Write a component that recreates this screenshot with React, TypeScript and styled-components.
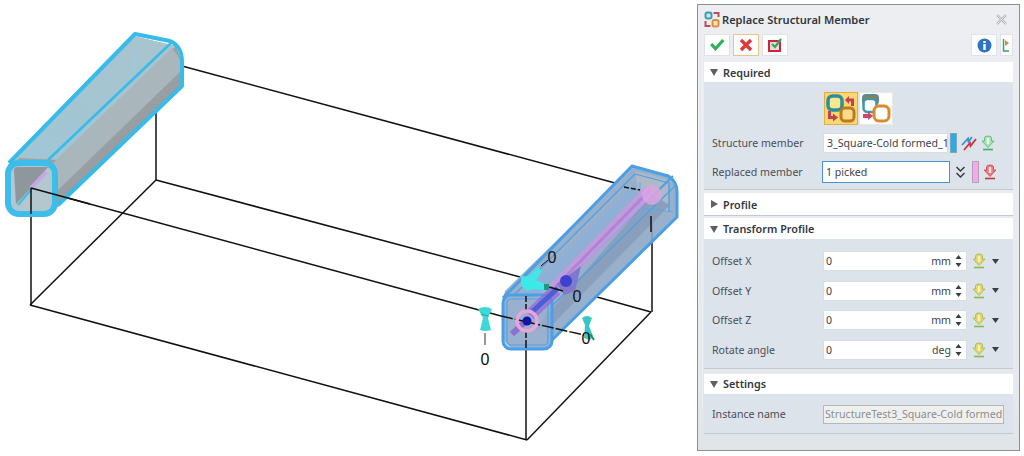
import React from "react";
import styled, { createGlobalStyle } from "styled-components";

const GlobalStyle = createGlobalStyle`
  html, body {
    margin: 0;
    padding: 0;
    background: #fff;
    overflow: hidden;
  }
  body {
    font-family: "Noto Sans", "Liberation Sans", sans-serif;
  }
`;

const Page = styled.div`
  display: flex;
  width: 1024px;
  height: 456px;
  background: #fff;
`;

const Viewport = styled.svg`
  display: block;
  flex: none;
  width: 697px;
  height: 456px;
`;

const Panel = styled.div`
  flex: none;
  display: flex;
  flex-direction: column;
  box-sizing: border-box;
  width: 323px;
  height: 447px;
  margin-top: 4px;
  padding: 0 6px;
  background: linear-gradient(#eceef1, #e6e9ee 85%, #e0e3e8);
  border: 1px solid #8c8e90;
`;

const TitleBar = styled.div`
  display: flex;
  align-items: center;
  height: 29px;
  gap: 2px;
  padding-right: 5px;
`;

const Title = styled.div`
  flex: 1;
  font-size: 11.1px;
  font-weight: 600;
  color: #33373d;
`;

const Toolbar = styled.div`
  display: flex;
  height: 22px;
  gap: 3px;
  margin-bottom: 6px;
`;

const ToolButton = styled.div<{ $active?: boolean; $narrow?: boolean }>`
  box-sizing: border-box;
  display: flex;
  align-items: center;
  justify-content: center;
  width: ${(p) => (p.$narrow ? "13px" : "26px")};
  background: #fdfdfd;
  border: 1px solid ${(p) => (p.$active ? "#eac48a" : "#dfe2e6")};
`;

const Spacer = styled.div`
  flex: 1;
`;

const Section = styled.div<{ $gap?: number }>`
  margin-bottom: ${(p) => p.$gap ?? 0}px;
  background: #dde3eb;
  box-shadow: 0 1px 0 #c3c9d1;
`;

const SectionHeader = styled.div<{ $h?: number }>`
  display: flex;
  align-items: center;
  gap: 5px;
  height: ${(p) => p.$h ?? 20}px;
  padding-left: 6px;
  background: #fff;
  font-size: 10.8px;
  font-weight: 600;
  color: #34383e;
`;

const SectionBody = styled.div<{ $top: number; $bottom: number; $gap: number }>`
  display: flex;
  flex-direction: column;
  gap: ${(p) => p.$gap}px;
  padding: ${(p) => p.$top}px 0 ${(p) => p.$bottom}px 8px;
`;

const PickRow = styled.div`
  display: flex;
  gap: 1px;
  height: 33px;
  padding-left: 112px;
`;

const PickButton = styled.div<{ $active?: boolean }>`
  box-sizing: border-box;
  width: 34px;
  height: 33px;
  background: ${(p) => (p.$active ? "#fbd76f" : "#fdfdfb")};
  border: 1px solid ${(p) => (p.$active ? "#e3ae4a" : "#e8e8e4")};
  display: flex;
  align-items: center;
  justify-content: center;
`;

const Row = styled.div<{ $h?: number }>`
  display: flex;
  align-items: center;
  height: ${(p) => p.$h ?? 20}px;
`;

const Label = styled.div`
  flex: none;
  width: 111px;
  font-size: 10.6px;
  color: #4a4e54;
`;

const Field = styled.div<{ $w: number; $focus?: boolean; $muted?: boolean; $end?: boolean }>`
  box-sizing: border-box;
  flex: none;
  display: flex;
  align-items: center;
  justify-content: space-between;
  width: ${(p) => p.$w}px;
  height: 100%;
  padding: ${(p) => (p.$end ? "0 4px 0 2px" : p.$muted ? "0 0 0 1px" : "0 2px 0 3px")};
  margin-left: ${(p) => (p.$focus ? "-1px" : "0")};
  white-space: nowrap;
  background: ${(p) => (p.$muted ? "#eff0ee" : "#fff")};
  border: 1px solid ${(p) => (p.$focus ? "#4c93c8" : p.$muted ? "#b4b8b8" : "#d9dde2")};
  font-size: 10.6px;
  color: ${(p) => (p.$muted ? "#8a8c8e" : "#3e4248")};
`;

const Unit = styled.span`
  display: flex;
  align-items: center;
  gap: 4px;
`;

const Swatch = styled.div<{ $color: string; $edge: string; $h: number; $ml: number }>`
  box-sizing: border-box;
  flex: none;
  width: 7px;
  height: ${(p) => p.$h}px;
  margin-left: ${(p) => p.$ml}px;
  background: ${(p) => p.$color};
  border: 1px solid ${(p) => p.$edge};
`;

const RowIcon = styled.svg<{ $ml?: number }>`
  display: block;
  flex: none;
  margin-left: ${(p) => p.$ml ?? 0}px;
`;

const Caret = ({ open }: { open: boolean }) => (
  <svg width="8" height="8" viewBox="0 0 8 8">
    <path d={open ? "M0 1h8L4 8z" : "M1 0l7 4-7 4z"} fill="#5c5f63" />
  </svg>
);

const Spin = () => (
  <svg width="7" height="14" viewBox="0 0 7 14">
    <path d="M3.5 1L6.5 5H.5zM3.5 13L.5 9h6z" fill="#3a3d42" />
  </svg>
);

const PinIcon = ({ color, core, stem, ml }: { color: string; core: string; stem: string; ml?: number }) => (
  <RowIcon $ml={ml} width="14" height="16" viewBox="0 0 14 16">
    <path d="M3.500 3Q3.500 1 7 1t3.500 2V6H13L7 12.500 1 6h2.500z" fill={color} stroke={stem} strokeWidth="0.7" />
    <path d="M7 3v6" stroke={core} strokeWidth="2.400" />
    <path d="M2 14.500h10" stroke={stem} strokeWidth="1.600" />
  </RowIcon>
);

const DropCaret = () => (
  <RowIcon $ml={6} width="7" height="5" viewBox="0 0 7 5">
    <path d="M0 0h7L3.500 5z" fill="#3c3f44" />
  </RowIcon>
);

const AppIcon = () => (
  <svg width="16" height="17" viewBox="0 0 16 17" fill="none">
    <rect x="1.500" y="1.500" width="6" height="6" rx="2" fill="#cfe4ea" stroke="#3c9fb0" strokeWidth="2" />
    <rect x="8.500" y="9" width="6" height="6.500" rx="2" fill="#f6e2c0" stroke="#dd8f3c" strokeWidth="2" />
    <path d="M9.500 2h5v4" stroke="#c04a5c" strokeWidth="2" />
    <path d="M1.500 10v5h5" stroke="#c04a5c" strokeWidth="2" />
  </svg>
);

const CloseIcon = () => (
  <svg width="13" height="11" viewBox="0 0 13 11" fill="none">
    <path d="M2 1l9 9M11 1l-9 9" stroke="#b0b4b8" strokeWidth="2.400" />
    <path d="M2 1l9 9M11 1l-9 9" stroke="#eef0f2" strokeWidth="0.800" />
  </svg>
);

const ReplaceIcon = () => (
  <svg width="32" height="31" viewBox="0 0 32 31" fill="none">
    <rect x="3" y="3" width="14" height="14" rx="4.500" fill="#f6e88e" stroke="#2c8f9c" strokeWidth="3.500" />
    <rect x="16" y="15" width="13" height="13" rx="4" fill="#f9dc8a" stroke="#c07a1e" strokeWidth="3" />
    <path d="M20 7l4-4v2.500h5V13h-3V8.500h-2V11z" fill="#c2404f" />
    <path d="M3 18h3v5h2v-2.500l5 4-5 4V26H3z" fill="#c2404f" />
  </svg>
);

const ReplaceAllIcon = () => (
  <svg width="32" height="31" viewBox="0 0 32 31" fill="none">
    <rect x="3" y="2" width="15" height="9" rx="3" fill="#8f7d55" stroke="#5d8a90" strokeWidth="2" />
    <rect x="3.500" y="6" width="13" height="13" rx="4" fill="#fff" stroke="#3d9aa6" strokeWidth="2.500" />
    <rect x="14" y="13" width="15" height="15" rx="5" fill="#fff" stroke="#d88a2c" strokeWidth="3" />
    <path d="M3 21h5v-2l5 4-5 4v-2H3z" fill="#c9486a" />
  </svg>
);

const Canvas = () => (
  <Viewport viewBox="0 0 697 456">
    <defs>
      <linearGradient id="sideLeft" x1="0" y1="0" x2="1" y2="1">
        <stop offset="0" stopColor="#a6adb2" />
        <stop offset="1" stopColor="#8f9599" />
      </linearGradient>
      <linearGradient id="topLeft" x1="0" y1="1" x2="1" y2="0">
        <stop offset="0" stopColor="#9fc6d6" />
        <stop offset="1" stopColor="#a9c4cd" />
      </linearGradient>
    </defs>

    {/* wire frame */}
    <g stroke="#111" strokeWidth="1.500" fill="none">
      <path d="M182 66L615 183" />
      <path d="M156 108V180" />
      <path d="M156 180L520 277M597 297L651 312" />
      <path d="M156 180L30 305" />
      <path d="M31 188V305" />
      <path d="M31 188L501 316" />
      <path d="M30 305L527 440" />
      <path d="M527 440L651 312" />
      <path d="M526 350V440" />
      <path d="M652 218V312" />
    </g>

    {/* left tube */}
    <path d="M8 165L133 36L176 46L182 62V88L58 207L20 205L6 190z" fill="url(#sideLeft)" />
    <path d="M8 165L133 36L176 46L60 160L20 158z" fill="url(#topLeft)" />
    <path d="M50 166L172 48L182 62V70L56 192z" fill="#a9b6bc" />
    <g fill="none" stroke="#36bbea" strokeLinejoin="round">
      <path d="M9 163L135 34L170 41Q182 46 182 62V86L58 205" strokeWidth="4" />
      <path d="M48 160L172 42" strokeWidth="2.500" />
      <path d="M134 46V72" stroke="#8fcfe4" strokeWidth="1" />
    </g>
    <rect x="8" y="163" width="47" height="51" rx="11" fill="#b4c6ce" stroke="#3cbdea" strokeWidth="6" />
    <path d="M14 170Q14 167 18 167H48L31 188L16 204z" fill="#8d979c" />
    <path d="M18 205L31 190" stroke="#3cbdea" strokeWidth="2" />
    <path d="M31 188L46 172" stroke="#c6a6e6" strokeWidth="4" />
    <path d="M31 188L90 204M31 188V214" stroke="#111" strokeWidth="1.500" />

    {/* right tube */}
    <path d="M505 291L633 166L670 175Q677 182 677 190V218L551 342L548 349H512L502 338V302z" fill="#8ea7c8" fillOpacity="0.9" />
    <path d="M520 297L640 178L665 184L551 297z" fill="#8fb0d6" />
    <path d="M635 171L668 180V212L640 205z" fill="#aeb9c6" />
    <path d="M534 330L652 195L670 205L552 325z" fill="#8a9fbc" />
    <g fill="none" stroke="#4a9fe6" strokeLinejoin="round">
      <path d="M503 298L632 166L668 176Q677 181 677 192V217L552 340" strokeWidth="3" />
      <path d="M512 297L635 174L669 183V212" strokeWidth="1.200" />
      <path d="M551 296L673 176" strokeWidth="2" />
      <path d="M552 306L675 186" strokeWidth="1.200" />
    </g>
    <path d="M640 182V208M640 208L673 212" stroke="#5aa8e8" strokeWidth="1" fill="none" />
    <path d="M528 315L650 190" stroke="#c79adf" strokeWidth="12" opacity="0.85" />
    <path d="M528 315L650 190" stroke="#b084d4" strokeWidth="3" />
    <circle cx="652" cy="195" r="10" fill="#d8a4e2" fillOpacity="0.85" />
    <path d="M624 187L640 190" stroke="#111" strokeWidth="1.500" strokeDasharray="5 2" />
    <path d="M651 216V232" stroke="#111" strokeWidth="1.500" />
    <rect x="503" y="295" width="49" height="54" rx="8" fill="#9ab2d0" fillOpacity="0.6" stroke="#4a9fe6" strokeWidth="3" />
    <rect x="507" y="299" width="41" height="46" rx="4" fill="none" stroke="#4ba3e8" strokeWidth="1.200" />
    <path d="M512 334L527 320" stroke="#8c6fd0" strokeWidth="6" />
    <path d="M530 315L556 290" stroke="#9068d8" strokeWidth="12" opacity="0.7" />
    <path d="M532 312L558 288" stroke="#3d5ad8" strokeWidth="5" opacity="0.85" />
    <path d="M581 266L575 291L564 295L557 284z" fill="#8078cc" />
    <circle cx="566" cy="281" r="6" fill="#3f3fd0" />

    {/* drag handles */}
    <path d="M521 275Q527 278 530 275L538 267L542 271L536 280L545 284V291L535 289L527 291L521 286z" fill="#3fe8e8" />
    <rect x="544" y="284" width="5" height="6" fill="#1e9a82" />
    <path d="M478 309Q485 305 492 309L488 318L491 330Q485 332 480 330L483 318z" fill="#3fd8d8" />
    <path d="M481 314L488 316" stroke="#2a9a9a" strokeWidth="1" />
    <path d="M582 318Q587 314 592 318L589 326L593 336L590 340L584 338L585 325z" fill="#38c8c4" />
    <path d="M590 334L594 340" stroke="#1e8a6a" strokeWidth="2" />
    <path d="M485 333V345" stroke="#333" strokeWidth="1" />

    <g stroke="#111" strokeWidth="1.500" fill="none">
      <path d="M526 296V312" strokeDasharray="6 2" />
      <path d="M501 316L584 335" strokeDasharray="12 2" />
      <path d="M549 287L563 291" />
      <path d="M541 266L548 260" strokeWidth="1" />
      <path d="M526 330V350" strokeDasharray="8 2" />
    </g>
    <circle cx="527" cy="321" r="10" fill="none" stroke="#eaa4dc" strokeWidth="3.500" />
    <circle cx="527" cy="321" r="4.500" fill="#1414a0" />

    <g fontFamily="Liberation Sans, sans-serif" fontSize="16" fill="#111" textAnchor="middle">
      <text x="552" y="263">0</text>
      <text x="577" y="302">0</text>
      <text x="485" y="365">0</text>
      <text x="586" y="344">0</text>
    </g>
  </Viewport>
);

const offsets = [
  { label: "Offset X", unit: "mm" },
  { label: "Offset Y", unit: "mm" },
  { label: "Offset Z", unit: "mm" },
  { label: "Rotate angle", unit: "deg" },
];

export default function App() {
  return (
    <Page>
      <GlobalStyle />
      <Canvas />
      <Panel>
        <TitleBar>
          <AppIcon />
          <Title>Replace Structural Member</Title>
          <CloseIcon />
        </TitleBar>
        <Toolbar>
          <ToolButton>
            <svg width="16" height="14" viewBox="0 0 16 14">
              <path d="M1 7l2.500-2 3 3.500L13 1l2.500 2L6.500 13z" fill="#2fb05a" />
            </svg>
          </ToolButton>
          <ToolButton $active>
            <svg width="14" height="14" viewBox="0 0 14 14">
              <path d="M2 2l10 10M12 2L2 12" stroke="#dc3a3a" strokeWidth="3.400" />
            </svg>
          </ToolButton>
          <ToolButton>
            <svg width="16" height="16" viewBox="0 0 16 16" fill="none">
              <rect x="2" y="4" width="11" height="10" fill="#f3d8dc" stroke="#c6283e" strokeWidth="2" />
              <path d="M5 7l3 3 6-8" stroke="#3aa858" strokeWidth="2.200" />
            </svg>
          </ToolButton>
          <Spacer />
          <ToolButton>
            <svg width="15" height="15" viewBox="0 0 15 15">
              <circle cx="7.500" cy="7.500" r="7" fill="#2f74c0" />
              <rect x="6.300" y="6" width="2.400" height="6" fill="#fff" />
              <rect x="6.300" y="3" width="2.400" height="2" fill="#fff" />
            </svg>
          </ToolButton>
          <ToolButton $narrow>
            <svg width="9" height="16" viewBox="0 0 9 16" fill="none">
              <path d="M1.500 2V14H7" stroke="#3aa070" strokeWidth="1.500" />
              <path d="M3 3l4 3-4 3z" fill="#e0863c" />
            </svg>
          </ToolButton>
        </Toolbar>

        <Section $gap={4}>
          <SectionHeader>
            <Caret open />
            Required
          </SectionHeader>
          <SectionBody $top={10} $bottom={6} $gap={8}>
            <PickRow>
              <PickButton $active>
                <ReplaceIcon />
              </PickButton>
              <PickButton>
                <ReplaceAllIcon />
              </PickButton>
            </PickRow>
            <Row>
              <Label>Structure member</Label>
              <Field $w={125}>3_Square-Cold formed_1</Field>
              <Swatch $color="#1fb1e6" $edge="#8aa4b4" $h={20} $ml={2} />
              <RowIcon $ml={4} width="16" height="16" viewBox="0 0 16 16" fill="none">
                <path d="M1 10L7 3.500l.5 3L11 2" stroke="#3a8fd0" strokeWidth="1.800" />
                <path d="M3 15l6-7 .5 3L15 4" stroke="#c8333f" strokeWidth="1.800" />
              </RowIcon>
              <PinIcon color="#a8e4b4" core="#f2f8e8" stem="#3fae68" ml={4} />
            </Row>
            <Row $h={22}>
              <Label>Replaced member</Label>
              <Field $w={128} $focus>
                1 picked
              </Field>
              <RowIcon $ml={5} width="11" height="14" viewBox="0 0 11 14" fill="none">
                <path d="M1.500 2l4 4 4-4M1.500 8l4 4 4-4" stroke="#33363b" strokeWidth="1.400" />
              </RowIcon>
              <Swatch $color="#f3a9ea" $edge="#b8a0b4" $h={22} $ml={6} />
              <PinIcon color="#ee7a80" core="#fbe8e8" stem="#c8333f" ml={4} />
            </Row>
          </SectionBody>
        </Section>

        <Section $gap={3}>
          <SectionHeader $h={22}>
            <Caret open={false} />
            Profile
          </SectionHeader>
        </Section>

        <Section $gap={6}>
          <SectionHeader $h={21}>
            <Caret open />
            Transform Profile
          </SectionHeader>
          <SectionBody $top={12} $bottom={8} $gap={9.5}>
            {offsets.map((o) => (
              <Row key={o.label}>
                <Label>{o.label}</Label>
                <Field $w={144} $end>
                  <span>0</span>
                  <Unit>
                    {o.unit}
                    <Spin />
                  </Unit>
                </Field>
                <PinIcon color="#e8d466" core="#f8f0c0" stem="#8cb84a" ml={5} />
                <DropCaret />
              </Row>
            ))}
          </SectionBody>
        </Section>

        <Section>
          <SectionHeader>
            <Caret open />
            Settings
          </SectionHeader>
          <SectionBody $top={11} $bottom={9} $gap={0}>
            <Row $h={19}>
              <Label>Instance name</Label>
              <Field $w={181} $muted>
                StructureTest3_Square-Cold formed
              </Field>
            </Row>
          </SectionBody>
        </Section>
      </Panel>
    </Page>
  );
}
